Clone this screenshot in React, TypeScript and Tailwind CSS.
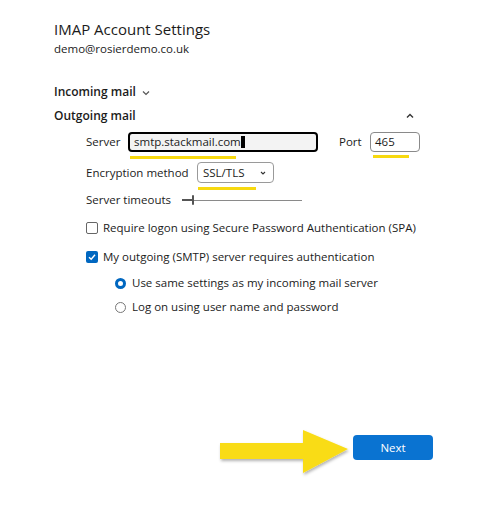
import React from 'react';

const font = { fontFamily: '"Open Sans", "Noto Sans", sans-serif' };

const Mark: React.FC<{ className: string }> = ({ className }) => (
  <div className={`absolute h-[3px] bg-[#f7d90f] ${className}`} />
);

export default function App() {
  return (
    <div className="relative w-[488px] h-[519px] bg-white text-[#1b1b1b] overflow-hidden" style={font}>
      <div className="pl-[54px] pt-[18px]">
        <h1 className="text-[15px] leading-[22px] text-[#1b1b1b]">IMAP Account Settings</h1>
        <p className="text-[11.5px] leading-[16px] mt-[1px]">demo@rosierdemo.co.uk</p>

        <div className="mt-[26px] flex items-center h-[18px] gap-[5px]">
          <span className="text-[12px] font-semibold">Incoming mail</span>
          <svg width="10" height="10" viewBox="0 0 10 10" className="mt-[1px]">
            <path d="M2 3.5 L5 6.5 L8 3.5" fill="none" stroke="#555" strokeWidth="1.2" />
          </svg>
        </div>

        <div className="mt-[6px] flex items-center justify-between h-[18px] pr-[73px]">
          <span className="text-[12px] font-semibold">Outgoing mail</span>
          <svg width="10" height="10" viewBox="0 0 10 10">
            <path d="M2 6.5 L5 3.5 L8 6.5" fill="none" stroke="#333" strokeWidth="1.4" />
          </svg>
        </div>
      </div>

      <div className="pl-[86px] mt-[7px] text-[11.5px]">
        {/* server row */}
        <div className="flex items-center h-[20px]">
          <span className="w-[42px]">Server</span>
          <div className="relative w-[190px] h-[20px] rounded-[4px] border-2 border-black bg-[#f3f3f3] flex items-center pl-[4px]">
            <span className="leading-none">smtp.stackmail.com</span>
            <span className="inline-block w-[4px] h-[12px] bg-black" />
            <Mark className="left-0 top-[22px] w-[106px]" />
          </div>
          <span className="ml-[21px] w-[31px]">Port</span>
          <div className="relative w-[50px] h-[20px] rounded-[4px] border border-[#8a8a8a] flex items-center pl-[4px]">
            465
            <Mark className="left-[2px] top-[22px] w-[36px]" />
          </div>
        </div>

        {/* encryption */}
        <div className="flex items-center h-[21px] mt-[10px]">
          <span className="w-[111px]">Encryption method</span>
          <div className="relative w-[77px] h-[21px] rounded-[4px] border border-[#9a9a9a] flex items-center justify-between pl-[5px] pr-[6px]">
            <span>SSL/TLS</span>
            <svg width="8" height="8" viewBox="0 0 8 8">
              <path d="M2 3 L4 5 L6 3" fill="none" stroke="#333" strokeWidth="1.1" />
            </svg>
            <Mark className="left-0 top-[24px] w-[58px]" />
          </div>
        </div>

        {/* timeouts */}
        <div className="flex items-center h-[16px] mt-[9px]">
          <span className="w-[96px]">Server timeouts</span>
          <div className="relative w-[120px] h-[12px] flex items-center">
            <div className="w-[10px] h-[2px] bg-[#555]" />
            <div className="w-[2px] h-[10px] bg-[#555] rounded-sm" />
            <div className="flex-1 h-px bg-[#8a8a8a]" />
          </div>
        </div>

        {/* checkboxes */}
        <div className="flex items-center h-[16px] mt-[12px] gap-[5px]">
          <div className="w-[12px] h-[12px] border border-[#666] rounded-[2px]" />
          <span>Require logon using Secure Password Authentication (SPA)</span>
        </div>
        <div className="flex items-center h-[16px] mt-[13px] gap-[5px]">
          <div className="w-[12px] h-[12px] rounded-[2px] bg-[#0067c0] flex items-center justify-center">
            <svg width="10" height="10" viewBox="0 0 10 10">
              <path d="M2 5.2 L4.2 7.2 L8 2.8" fill="none" stroke="white" strokeWidth="1.4" />
            </svg>
          </div>
          <span>My outgoing (SMTP) server requires authentication</span>
        </div>

        <div className="pl-[29px]">
          <div className="flex items-center h-[16px] mt-[10px] gap-[6px]">
            <div className="w-[11px] h-[11px] rounded-full border-[3px] border-[#0067c0] bg-white" />
            <span>Use same settings as my incoming mail server</span>
          </div>
          <div className="flex items-center h-[16px] mt-[8px] gap-[6px]">
            <div className="w-[11px] h-[11px] rounded-full border border-[#777] bg-white" />
            <span>Log on using user name and password</span>
          </div>
        </div>
      </div>

      <div className="flex justify-end pr-[55px] mt-[120px]">
        <button className="w-[80px] h-[25px] rounded-[4px] bg-[#0a73d1] text-white text-[11.5px]">Next</button>
      </div>

      <svg className="absolute left-[214px] top-[426px]" width="142" height="56" viewBox="0 0 142 56">
        <defs>
          <filter id="sh" x="-10%" y="-20%" width="130%" height="150%">
            <feDropShadow dx="1" dy="2" stdDeviation="1.5" floodColor="#000" floodOpacity="0.3" />
          </filter>
        </defs>
        <path d="M6 17 L89 17 L89 4 L134 23 L89 47 L89 33 L6 33 Z" fill="#f9dc16" filter="url(#sh)" />
      </svg>
    </div>
  );
}
